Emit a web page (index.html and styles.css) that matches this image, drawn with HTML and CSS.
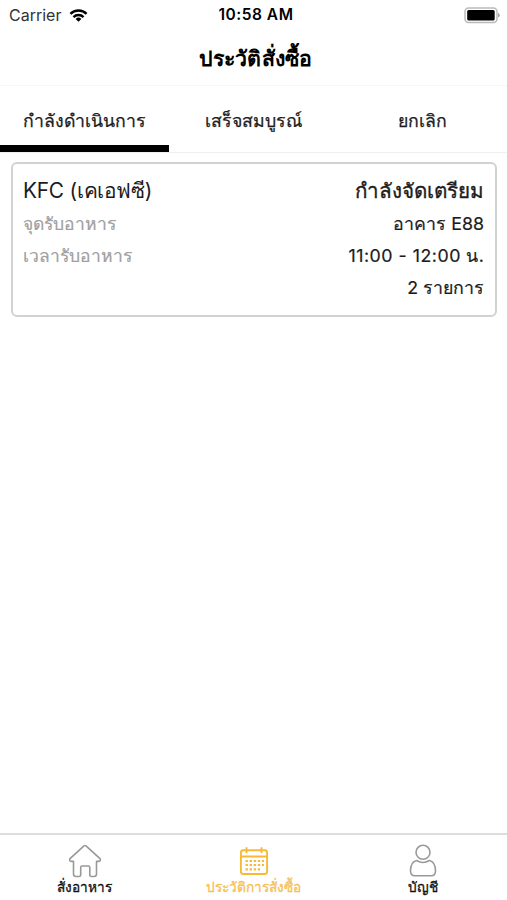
FILE: index.html
```html
<!DOCTYPE html>
<html lang="th">
<head>
<meta charset="utf-8">
<title>ประวัติสั่งซื้อ</title>
<link rel="stylesheet" href="styles.css">
</head>
<body>
<div class="screen">
  <div class="status">
    <div class="carrier"><span>Carrier</span>
      <svg width="19" height="13" viewBox="0 0 20 14"><g fill="none" stroke="#000" stroke-width="2.6"><path d="M1.3 5.2a12.4 12.4 0 0 1 17.4 0"/><path d="M4.6 8.7a7.7 7.7 0 0 1 10.8 0"/></g><path d="M10 13.8 6.9 10.7a4.4 4.4 0 0 1 6.2 0z"/></svg>
    </div>
    <div class="time">10:58 AM</div>
    <svg class="battery" width="37" height="17" viewBox="0 0 37 17"><rect x="2" y="1" width="32" height="14.500" rx="3.500" fill="#fff" stroke="#bbb" stroke-width="1.500"/><rect x="4.200" y="3" width="27.500" height="10.500" rx="1.500"/><path d="M35 5.800q1.800 .7 1.800 2.400t-1.800 2.400z" fill="#aaa"/></svg>
  </div>
  <h1 class="title">ประวัติสั่งซื้อ</h1>
  <div class="tabs">
    <div class="tab active">กำลังดำเนินการ</div>
    <div class="tab">เสร็จสมบูรณ์</div>
    <div class="tab">ยกเลิก</div>
  </div>
  <div class="content">
    <div class="card">
      <div class="row head"><span class="store">KFC (เคเอฟซี)</span><span class="state">กำลังจัดเตรียม</span></div>
      <div class="row"><span class="label">จุดรับอาหาร</span><span>อาคาร E88</span></div>
      <div class="row"><span class="label">เวลารับอาหาร</span><span class="hours">11:00 - 12:00 น.</span></div>
      <div class="row"><span></span><span>2 รายการ</span></div>
    </div>
  </div>
  <div class="nav">
    <div class="item">
      <svg width="34" height="34" viewBox="0 0 34 34" fill="none" stroke="#999" stroke-width="1.6" stroke-linejoin="round"><path d="M16 1.900Q17 1.200 18 1.900L32 14.700Q33.200 17 30.500 17.400H28.500V30Q28.500 32.500 26 32.500H23.500Q21.800 32.500 21.800 30.500V23.500Q21.800 22 20.300 22H14.200Q12.700 22 12.700 23.500V30.500Q12.700 32.500 11 32.500H8Q5.500 32.500 5.500 30V17.400H3.500Q.8 17 2 14.700Z"/></svg>
      <span>สั่งอาหาร</span>
    </div>
    <div class="item selected">
      <svg width="34" height="34" viewBox="0 0 34 34" fill="none" stroke="#f7b938" stroke-width="1.900"><rect x="3.900" y="6.200" width="26.200" height="23.800" rx="2.500"/><path d="M4 12.500H30M9.500 3.300V9M24.500 3.300V9"/><path d="M8.500 17H27M8.500 21H27M8.500 25.300H23" stroke-width="2.200" stroke-dasharray="2.400 1.700"/></svg>
      <span>ประวัติการสั่งซื้อ</span>
    </div>
    <div class="item">
      <svg width="34" height="34" viewBox="0 0 34 34" fill="none" stroke="#999" stroke-width="1.600"><circle cx="17" cy="8.300" r="7"/><path d="M10.700 16.500C6.500 17.500 4.500 21.500 4.500 27Q4.500 31.700 9 31.700H25Q29.500 31.700 29.500 27C29.500 21.500 27.500 17.500 23.300 16.500Q17 20.500 10.700 16.500Z"/></svg>
      <span>บัญชี</span>
    </div>
  </div>
</div>
</body>
</html>
```
FILE: styles.css
```css
* { box-sizing: border-box; }
body { margin: 0; background: #fff; color: #1c1c1c; font-family: Inter, sans-serif; }
svg { display: block; flex: none; }
.screen { width: 507px; height: 900px; display: flex; flex-direction: column; }
.status { height: 30px; display: grid; grid-template-columns: 1fr auto 1fr; align-items: center; padding: 0 7px 0 9px; color: #000; }
.carrier { display: flex; align-items: center; gap: 8px; font-size: 16px; color: #333; }
.time { font-size: 15.5px; font-weight: 600; line-height: 30px; letter-spacing: 0.5px; padding-left: 3px; }
.battery { justify-self: end; }
.title { margin: 0; height: 56px; border-bottom: 1px solid #f7f7f7; text-align: center; font-size: 21.3px; font-weight: 700; line-height: 57px; padding-left: 4px; letter-spacing: 0.15px; color: #000; }
.tabs { display: flex; height: 67px; border-bottom: 1px solid #f0f0f0; }
.tab { flex: 1; height: 66px; text-align: center; font-size: 17.7px; line-height: 69px; -webkit-text-stroke: 0.25px currentColor; }
.active { border-bottom: 7px solid #000; }
.content { flex: 1; padding: 9px 10px 0 11px; }
.card { height: 155px; border: 2px solid #d2d2d2; border-radius: 6px; padding: 10px 11px 0 10px; }
.row { display: flex; justify-content: space-between; height: 32px; line-height: 32px; font-size: 17.8px; -webkit-text-stroke: 0.2px currentColor; }
.head { height: 34px; line-height: 33px; font-size: 20.8px; }
.store { letter-spacing: -0.2px; -webkit-text-stroke: 0; }
.state { font-size: 20.6px; -webkit-text-stroke: 0.35px currentColor; }
.hours { letter-spacing: 0.5px; margin-right: -0.5px; }
.label { color: #a0a0a0; font-size: 17.5px; }
.nav { height: 67px; border-top: 2px solid #ddd; display: flex; }
.item { flex: 1; display: flex; flex-direction: column; align-items: center; padding-top: 9px; font-size: 13.7px; line-height: 18px; color: #111; -webkit-text-stroke: 0.3px currentColor; }
.selected { color: #f7c056; }
```
